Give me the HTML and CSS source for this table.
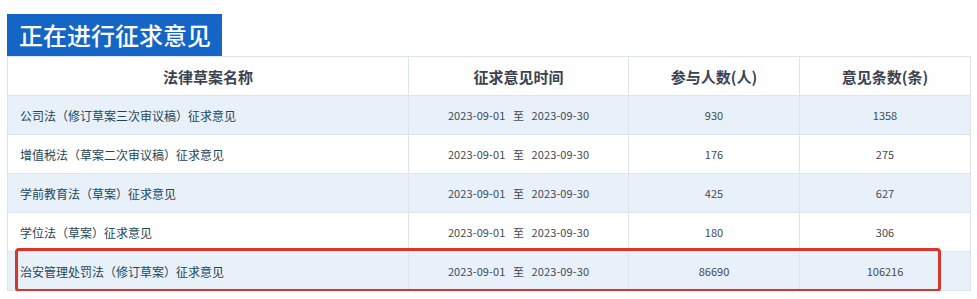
FILE: index.html
```html
<!DOCTYPE html>
<html lang="zh-CN">
<head>
<meta charset="utf-8">
<title>正在进行征求意见</title>
<link rel="stylesheet" href="styles.css">
</head>
<body>
<div class="page">
  <h2 class="title">正在进行征求意见</h2>
  <div class="table-wrap">
    <table class="list">
      <colgroup>
        <col class="c-name"><col class="c-time"><col class="c-num"><col class="c-num">
      </colgroup>
      <thead>
        <tr><th>法律草案名称</th><th>征求意见时间</th><th>参与人数(人)</th><th>意见条数(条)</th></tr>
      </thead>
      <tbody>
        <tr><td class="name">公司法（修订草案三次审议稿）征求意见</td><td class="date">2023-09-01 至 2023-09-30</td><td>930</td><td>1358</td></tr>
        <tr><td class="name">增值税法（草案二次审议稿）征求意见</td><td class="date">2023-09-01 至 2023-09-30</td><td>176</td><td>275</td></tr>
        <tr><td class="name">学前教育法（草案）征求意见</td><td class="date">2023-09-01 至 2023-09-30</td><td>425</td><td>627</td></tr>
        <tr><td class="name">学位法（草案）征求意见</td><td class="date">2023-09-01 至 2023-09-30</td><td>180</td><td>306</td></tr>
        <tr><td class="name">治安管理处罚法（修订草案）征求意见</td><td class="date">2023-09-01 至 2023-09-30</td><td>86690</td><td>106216</td></tr>
      </tbody>
    </table>
    <div class="highlight"></div>
  </div>
</div>
</body>
</html>
```
FILE: styles.css
```css
html, body {
  margin: 0;
  padding: 0;
  background: #ffffff;
}
.page {
  padding: 14px 7px 0 7px;
  font-family: "Noto Sans CJK SC", "Liberation Sans", sans-serif;
}
.title {
  display: inline-block;
  margin: 0;
  height: 42px;
  line-height: 42px;
  padding: 0 11px 0 12px;
  background: #1565c6;
  color: #ffffff;
  font-size: 24px;
  font-weight: 500;
  letter-spacing: 0;
  vertical-align: top;
}
.table-wrap {
  position: relative;
  width: 964px;
}
.list {
  width: 964px;
  border-collapse: collapse;
  table-layout: fixed;
  border: 1px solid #dde3ea;
}
.c-name { width: 401px; }
.c-time { width: 220px; }
.c-num { width: 171px; }
.list th,
.list td {
  height: 38px;
  padding: 0;
  border: 1px solid #dde4ec;
  text-align: center;
  vertical-align: middle;
}
.list th {
  font-size: 15px;
  font-weight: 700;
  color: #3b4350;
  background: #fefefe;
}
.list td {
  font-size: 11px;
  color: #444a52;
}
.list tbody tr:nth-child(odd) td {
  background: #e8f0fa;
}
.list td.name {
  text-align: left;
  padding-left: 12px;
  font-size: 12px;
  color: #1d4658;
}
.list td.date {
  font-size: 11px;
  word-spacing: 5px;
  letter-spacing: 0.1px;
}
.highlight {
  position: absolute;
  left: 8px;
  top: 192px;
  width: 920px;
  height: 38px;
  border: 3px solid #d6362b;
  border-radius: 4px;
  pointer-events: none;
}
```
